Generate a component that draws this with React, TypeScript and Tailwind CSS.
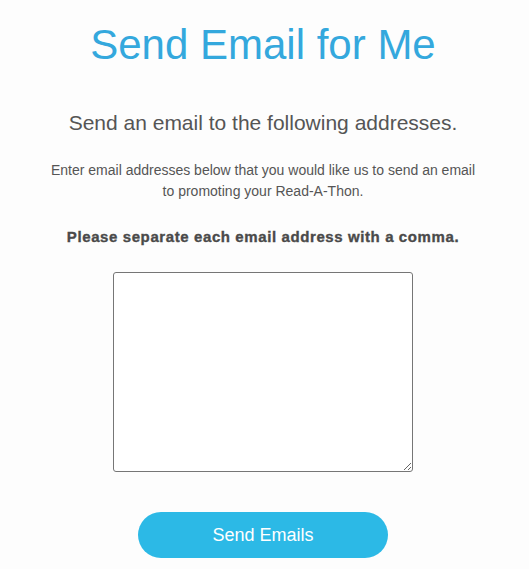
export default function App() {
  return (
    <div className="min-h-[569px] bg-[#fdfdfd] pr-[3px] text-center font-['Liberation_Sans',Arial,sans-serif] text-[#555555]">
      <h1 className="pt-[24px] text-[42px] leading-[42px] text-[#34a8dd]">Send Email for Me</h1>
      <h2 className="mt-[46px] text-[21px] leading-[21px]">Send an email to the following addresses.</h2>
      <p className="mx-auto mt-[27px] w-[430px] text-[14px] leading-[21px]">
        Enter email addresses below that you would like us to send an email to promoting your Read-A-Thon.
      </p>
      <p className="mt-[27px] text-[15px] font-bold leading-[15px] tracking-[0.6px] text-[#4a4a4a] [-webkit-text-stroke:0.35px_#4a4a4a]">
        Please separate each email address with a comma.
      </p>
      <textarea className="mx-auto mt-[28px] block h-[200px] w-[300px] rounded-[3px] border border-[#767676] bg-white" />
      <button className="mx-auto mt-[40px] block h-[46px] w-[250px] rounded-full bg-[#2cb9e6] text-[18px] text-white">
        Send Emails
      </button>
    </div>
  );
}
